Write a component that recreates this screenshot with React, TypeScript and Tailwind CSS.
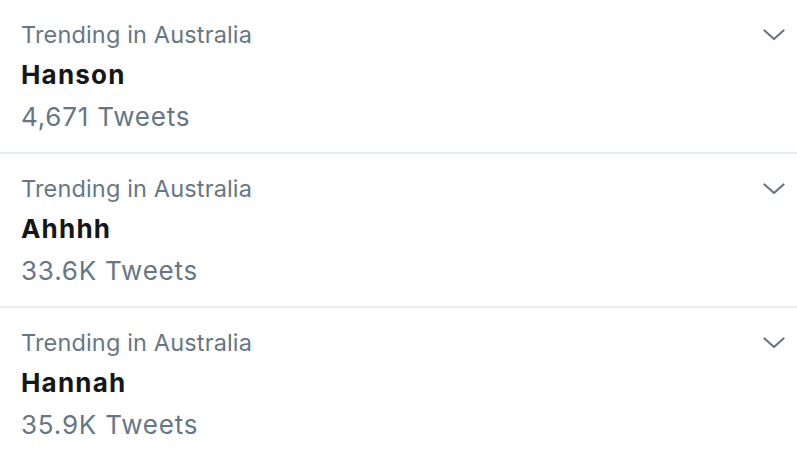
const trends = [
  { place: 'Australia', name: 'Hanson', count: '4,671 Tweets' },
  { place: 'Australia', name: 'Ahhhh', count: '33.6K Tweets' },
  { place: 'Australia', name: 'Hannah', count: '35.9K Tweets' },
];

const Chevron = () => (
  <svg width="22" height="12" viewBox="0 0 22 12" fill="none" className="text-[#657786]">
    <path d="M1.5 1.5 L11 10 L20.5 1.5" stroke="currentColor" strokeWidth="2.2" strokeLinecap="round" strokeLinejoin="round" />
  </svg>
);

export default function App() {
  return (
    <div className="w-[797px] h-[458px] overflow-hidden bg-white font-['Inter',sans-serif]">
      {trends.map((t, i) => (
        <div key={i} className="flex justify-between border-b-2 border-[#e6ecf0] pl-[21px] pr-[12px] pt-[15px] pb-[15px]">
          <div className="flex flex-col">
            <span className="text-[23.5px] leading-[40px] text-[#657786] tracking-[0.15px]">Trending in {t.place}</span>
            <span className="text-[26px] leading-[40px] font-bold text-[#14171a] tracking-[1.2px]">{t.name}</span>
            <span className="text-[26px] leading-[40px] pt-[2px] text-[#657786] tracking-[0.8px]">{t.count}</span>
          </div>
          <div className="pt-[14px]">
            <Chevron />
          </div>
        </div>
      ))}
    </div>
  );
}
